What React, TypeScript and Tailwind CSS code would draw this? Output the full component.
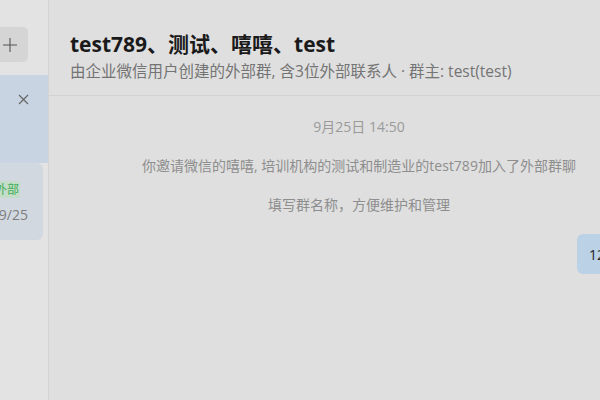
import React from "react";

export default function App() {
  const font = { fontFamily: '"Open Sans", "Noto Sans CJK SC", sans-serif' };
  return (
    <div className="w-[600px] h-[400px] overflow-hidden bg-[#dfdfdf]" style={font}>
      <div className="flex w-[669px] h-[400px]">
        {/* sidebar */}
        <div className="w-[49px] shrink-0 h-full bg-[#e3e3e3] border-r border-[#d3d3d3] flex flex-col">
          <div className="pt-[27px] h-[75px]">
            <div className="w-[28px] h-[35px] rounded-r-[5px] bg-[#d5d5d5] flex items-center justify-end pr-[10px]">
              <svg width="16" height="16" viewBox="0 0 16 16" fill="none" stroke="#555" strokeWidth="1.1">
                <path d="M8 1v14M1 8h14" />
              </svg>
            </div>
          </div>
          <div className="h-[88px] bg-[#c8d4e2] flex justify-end pt-[19px] pr-[19px]">
            <svg width="11" height="11" viewBox="0 0 11 11" fill="none" stroke="#666" strokeWidth="1.2">
              <path d="M1 1l9 9M10 1l-9 9" />
            </svg>
          </div>
          <div className="w-[43px] h-[77px] bg-[#d2d8e0] rounded-r-[6px] flex flex-col items-end pt-[18px] pr-[15px]">
            <div className="self-start w-[20px] overflow-hidden bg-[#c3ddc8] text-[#3fae5a] text-[12px] leading-[17px] rounded-r-[2px] flex justify-end">
              <span className="whitespace-nowrap pr-[1px]">外部</span>
            </div>
            <div className="text-[14px] leading-[20px] text-[#7d7d7d] mt-[7px]">9/25</div>
          </div>
        </div>
        {/* main */}
        <div className="flex-1 flex flex-col">
          <div className="h-[96px] border-b border-[#d2d2d2] pl-[21px] pt-[30px]">
            <div className="text-[21px] leading-[28px] font-bold text-[#1a1a1a]">test789、测试、嘻嘻、test</div>
            <div className="text-[15.5px] leading-[20px] text-[#747474] mt-[3px] whitespace-nowrap">
              由企业微信用户创建的外部群, 含3位外部联系人 · 群主: test(test)
            </div>
          </div>
          <div className="flex flex-col items-center pt-[21px]">
            <div className="text-[14px] leading-[19px] text-[#9a9a9a]">9月25日 14:50</div>
            <div className="text-[14px] leading-[19px] text-[#8e8e8e] mt-[20px]">
              你邀请微信的嘻嘻, 培训机构的测试和制造业的test789加入了外部群聊
            </div>
            <div className="text-[14px] leading-[19px] text-[#8e8e8e] mt-[20px]">填写群名称，方便维护和管理</div>
            <div className="self-stretch flex justify-end pr-[12px] mt-[20px]">
              <div className="h-[40px] rounded-[6px] bg-[#bad1e6] px-[12px] flex items-center text-[14px] text-[#222]">
                1234567
              </div>
            </div>
          </div>
        </div>
      </div>
    </div>
  );
}
